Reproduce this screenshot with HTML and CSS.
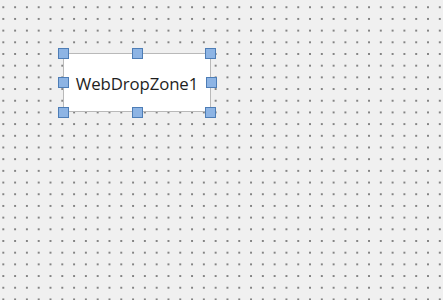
FILE: index.html
```html
<!DOCTYPE html>
<html>
<head>
<meta charset="utf-8">
<link rel="stylesheet" href="styles.css">
</head>
<body>
<div class="canvas">
  <div class="control">
    <span class="label">WebDropZone1</span>
    <span class="handle h-tl"></span>
    <span class="handle h-tm"></span>
    <span class="handle h-tr"></span>
    <span class="handle h-ml"></span>
    <span class="handle h-mr"></span>
    <span class="handle h-bl"></span>
    <span class="handle h-bm"></span>
    <span class="handle h-br"></span>
  </div>
</div>
</body>
</html>
```
FILE: styles.css
```css
html, body {
  margin: 0;
  padding: 0;
}
.canvas {
  width: 443px;
  height: 300px;
  box-sizing: border-box;
  padding: 53px 0 0 63px;
  background-color: #f0f0f0;
  background-image: radial-gradient(circle, #707070 0, #707070 0.6px, rgba(240,240,240,0) 1.2px);
  background-size: 11.8px 11.7px;
  background-position: -2.6px 1.4px;
}
.control {
  position: relative;
  width: 148px;
  height: 59px;
  box-sizing: border-box;
  background: #ffffff;
  border: 1px solid #b9b9b9;
  display: flex;
  align-items: center;
  justify-content: center;
}
.label {
  font-family: "Open Sans", "Noto Sans", sans-serif;
  font-size: 16.8px;
  color: #1e1e1e;
  letter-spacing: -0.1px;
  margin-top: 1px;
}
.handle {
  position: absolute;
  width: 11px;
  height: 11px;
  box-sizing: border-box;
  background: #8db4e4;
  border: 1px solid #4d7db6;
}
.h-tl { left: -6px; top: -6px; }
.h-tm { left: 68px; top: -6px; }
.h-tr { left: 141px; top: -6px; }
.h-ml { left: -6px; top: 23px; }
.h-mr { left: 142px; top: 23px; }
.h-bl { left: -6px; top: 53px; }
.h-bm { left: 68px; top: 53px; }
.h-br { left: 141px; top: 53px; }
```
